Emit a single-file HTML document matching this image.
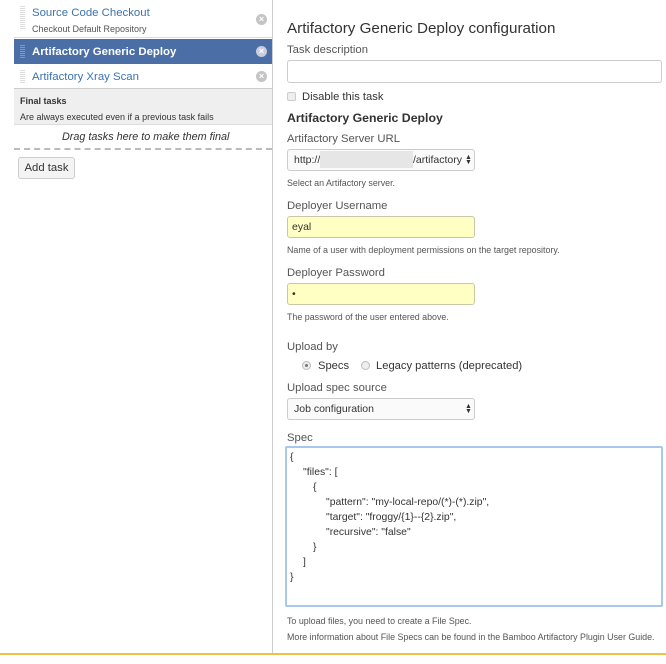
<!DOCTYPE html>
<html><head><style>
*{box-sizing:border-box;margin:0;padding:0}
body{width:666px;height:664px;background:#fff;font-family:"Liberation Sans",Arial,sans-serif;color:#333;position:relative;overflow:hidden;font-size:11.3px}
.a{position:absolute;white-space:nowrap}
.t{transform:translateY(2px)}
.lab{color:#555;font-size:11.3px;transform:translateY(2px)}
.help{color:#555;font-size:8.9px;transform:translateY(1px)}
.inp{position:absolute;border:1px solid #ccc;border-radius:3px;background:#fff}
.yel{background:#ffffc4;border-color:#c8c8a8}
.x{position:absolute;width:11px;height:11px;border-radius:50%;background:#c4c4c4;color:#fff;font-size:9px;line-height:11px;text-align:center;font-weight:bold}
.grip{position:absolute;width:5px;background:repeating-linear-gradient(#ddd 0 1px,#fff 1px 2px)}
.arr{position:absolute;font-size:7px;line-height:5px;color:#333}
.c{position:absolute;font-size:10.4px;white-space:nowrap;color:#333;transform:translateY(1px)}
</style></head><body>
<div class="a" style="left:14px;top:0;width:258px;height:38px;border-bottom:1px solid #ddd"></div>
<div class="grip" style="left:20px;top:6px;height:24px"></div>
<div class="a t" style="left:32px;top:5px;color:#3b73af;font-size:11.4px">Source Code Checkout</div>
<div class="a t" style="left:32px;top:22px;color:#555;font-size:9px">Checkout Default Repository</div>
<div class="x" style="left:256px;top:14px">×</div>
<div class="a" style="left:14px;top:39px;width:258px;height:25px;background:#4a6ea5"></div>
<div class="grip" style="left:20px;top:45px;height:13px;background:repeating-linear-gradient(#7f99c0 0 1px,#4a6ea5 1px 2px)"></div>
<div class="a t" style="left:32px;top:44px;color:#fff;font-weight:bold;font-size:11.4px">Artifactory Generic Deploy</div>
<div class="x" style="left:256px;top:46px;background:#ccd">×</div>
<div class="a" style="left:14px;top:64px;width:258px;height:25px;border-bottom:1px solid #ccc"></div>
<div class="grip" style="left:20px;top:70px;height:13px"></div>
<div class="a t" style="left:32px;top:69px;color:#3b73af;font-size:11.4px">Artifactory Xray Scan</div>
<div class="x" style="left:256px;top:71px">×</div>
<div class="a" style="left:14px;top:89px;width:258px;height:36px;background:#efefef;border-bottom:1px solid #ddd"></div>
<div class="a t" style="left:20px;top:94px;font-weight:bold;font-size:9px;color:#333">Final tasks</div>
<div class="a t" style="left:20px;top:110px;font-size:9px;color:#333">Are always executed even if a previous task fails</div>
<div class="a t" style="left:62px;top:129px;font-style:italic;font-size:10.8px;color:#333">Drag tasks here to make them final</div>
<div class="a" style="left:14px;top:148px;width:258px;border-top:2px dashed #bbb"></div>
<div class="a" style="left:18px;top:157px;width:57px;height:22px;border:1px solid #ccc;border-radius:3px;background:#f4f4f4;text-align:center;line-height:21px;font-size:11.3px;color:#333">Add task</div>
<div class="a" style="left:272px;top:0;width:1px;height:654px;background:#ccc"></div>
<div class="a" style="left:0;top:653px;width:666px;height:2px;background:#f0c040"></div>
<div class="a t" style="left:287px;top:18px;font-size:15.2px;color:#333">Artifactory Generic Deploy configuration</div>
<div class="a lab" style="left:287px;top:42px">Task description</div>
<div class="inp" style="left:287px;top:60px;width:375px;height:23px"></div>
<div class="inp" style="left:287px;top:92px;width:9px;height:9px;border-radius:2px;background:#eee"></div>
<div class="a t" style="left:302px;top:89px;font-size:11.2px">Disable this task</div>
<div class="a t" style="left:287px;top:109px;font-size:12.3px;font-weight:bold;color:#333">Artifactory Generic Deploy</div>
<div class="a lab" style="left:287px;top:131px">Artifactory Server URL</div>
<div class="inp" style="left:287px;top:149px;width:188px;height:22px;background:#fafafa"></div>
<div class="a t" style="left:294px;top:152px;font-size:10.5px">http://</div>
<div class="a" style="left:320px;top:151px;width:93px;height:17px;background:#e6e6e6"></div>
<div class="a t" style="left:413px;top:152px;font-size:10.5px">/artifactory</div>
<div class="arr" style="left:465px;top:155px">▲<br>▼</div>
<div class="a help" style="left:287px;top:177px">Select an Artifactory server.</div>
<div class="a lab" style="left:287px;top:198px">Deployer Username</div>
<div class="inp yel" style="left:287px;top:216px;width:188px;height:22px"></div>
<div class="a t" style="left:292px;top:219px;font-size:10.5px">eyal</div>
<div class="a help" style="left:287px;top:244px">Name of a user with deployment permissions on the target repository.</div>
<div class="a lab" style="left:287px;top:265px">Deployer Password</div>
<div class="inp yel" style="left:287px;top:283px;width:188px;height:22px"></div>
<div class="a t" style="left:292px;top:286px;font-size:10.5px">•</div>
<div class="a help" style="left:287px;top:311px">The password of the user entered above.</div>
<div class="a lab" style="left:287px;top:339px">Upload by</div>
<div class="a" style="left:302px;top:361px;width:9px;height:9px;border-radius:50%;border:1px solid #bbb;background:#eee"><div style="position:absolute;left:2px;top:2px;width:3px;height:3px;border-radius:50%;background:#777"></div></div>
<div class="a t" style="left:318px;top:358px;font-size:11.2px">Specs</div>
<div class="a" style="left:361px;top:361px;width:9px;height:9px;border-radius:50%;border:1px solid #bbb;background:#eee"></div>
<div class="a t" style="left:376px;top:358px;font-size:11.2px">Legacy patterns (deprecated)</div>
<div class="a lab" style="left:287px;top:380px">Upload spec source</div>
<div class="inp" style="left:287px;top:398px;width:188px;height:22px;background:#fafafa"></div>
<div class="a t" style="left:294px;top:401px;font-size:10.5px">Job configuration</div>
<div class="arr" style="left:465px;top:404px">▲<br>▼</div>
<div class="a lab" style="left:287px;top:430px">Spec</div>
<div class="a" style="left:285px;top:446px;width:378px;height:161px;border:2px solid #a9c6ec;border-radius:2px;background:#fff"></div>
<div class="c" style="left:290px;top:451px">{</div>
<div class="c" style="left:303px;top:466px">"files": [</div>
<div class="c" style="left:313px;top:481px">{</div>
<div class="c" style="left:326px;top:496px">"pattern": "my-local-repo/(*)-(*).zip",</div>
<div class="c" style="left:326px;top:511px">"target": "froggy/{1}--{2}.zip",</div>
<div class="c" style="left:326px;top:526px">"recursive": "false"</div>
<div class="c" style="left:313px;top:541px">}</div>
<div class="c" style="left:303px;top:556px">]</div>
<div class="c" style="left:290px;top:571px">}</div>
<div class="a help" style="left:287px;top:615px">To upload files, you need to create a File Spec.</div>
<div class="a help" style="left:287px;top:631px">More information about File Specs can be found in the Bamboo Artifactory Plugin User Guide.</div>
</body></html>
